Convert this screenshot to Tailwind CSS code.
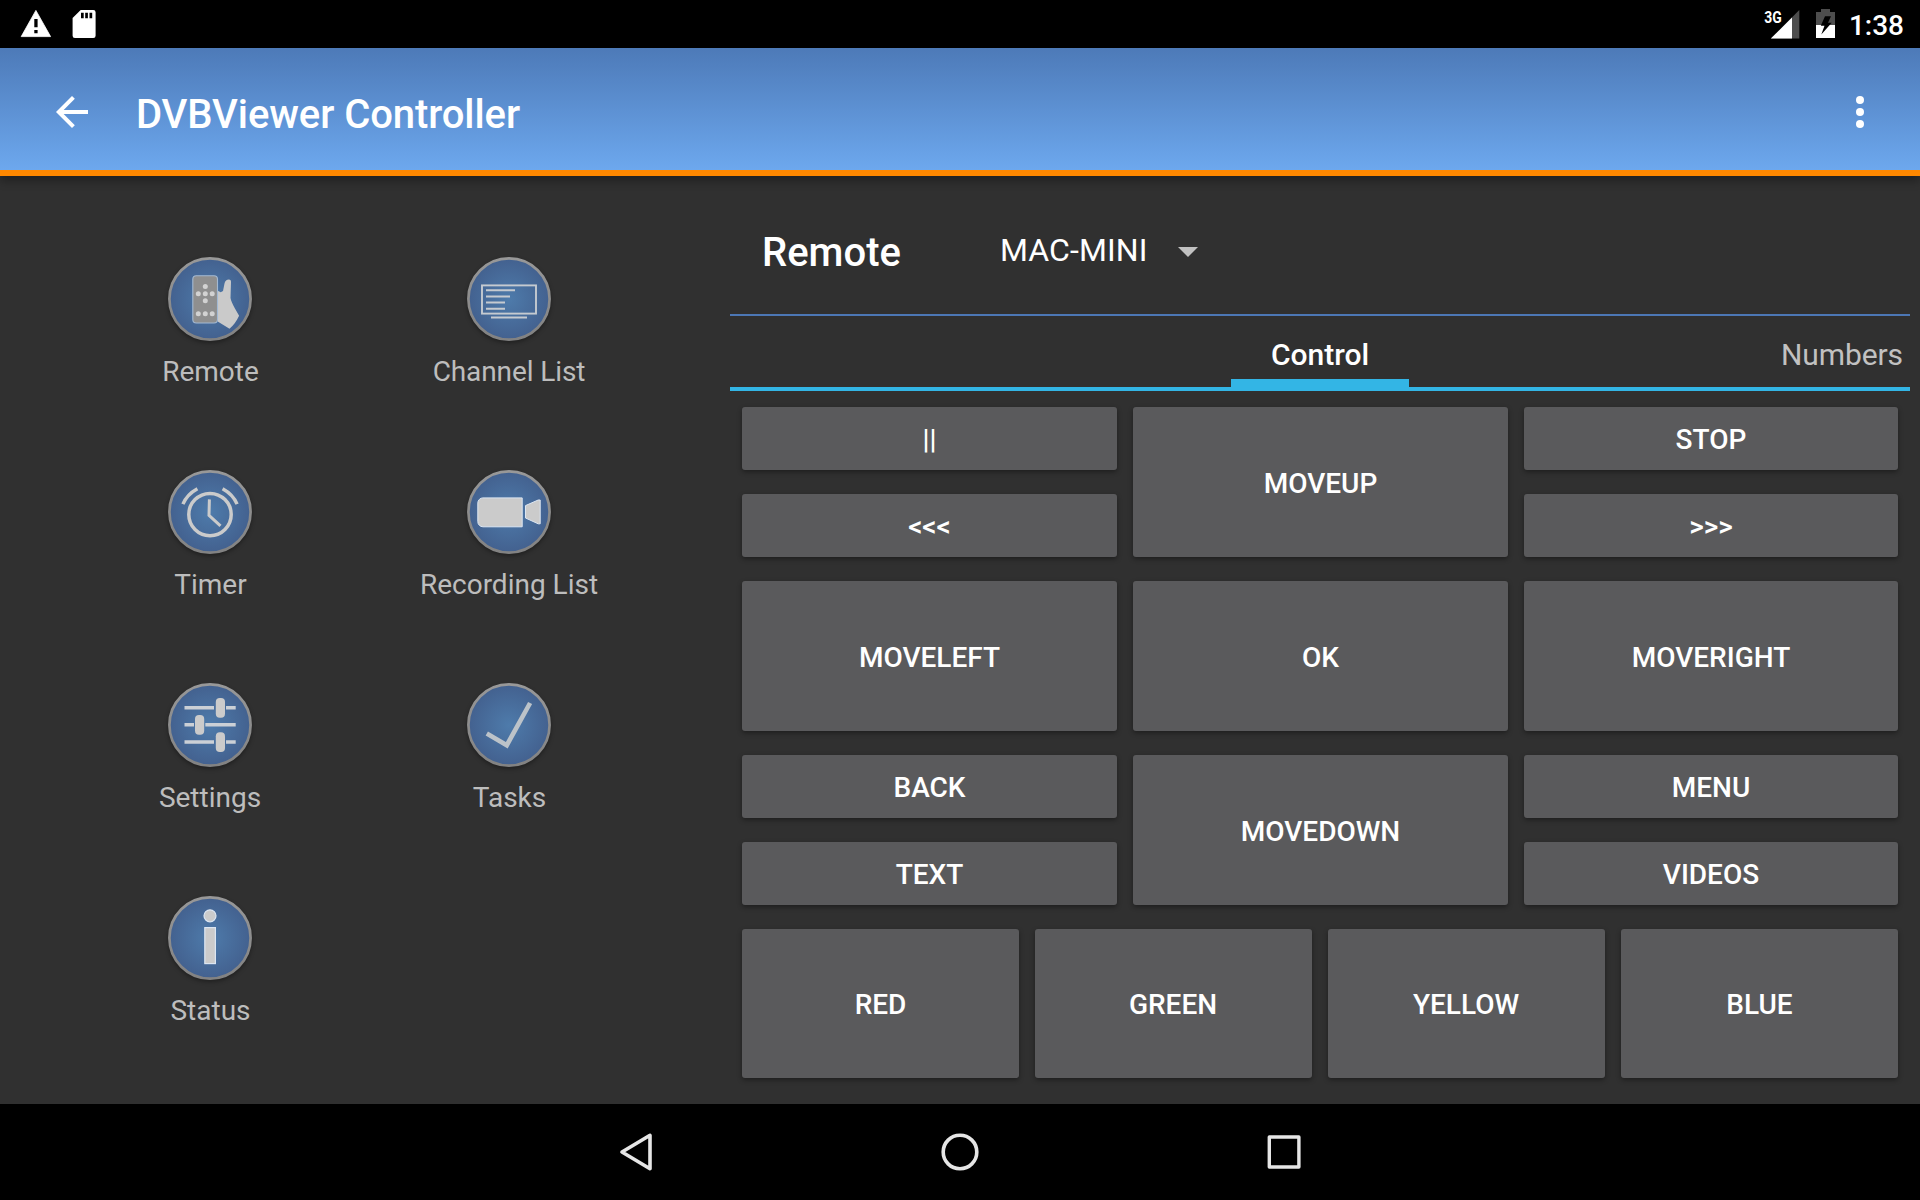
<!DOCTYPE html>
<html lang="en">
<head>
<meta charset="utf-8">
<title>DVBViewer Controller</title>
<script src="https://cdn.jsdelivr.net/npm/@tailwindcss/browser@4"></script>
</head>
<body class="flex h-[1200px] w-[1920px] flex-col overflow-hidden bg-[#303030] font-['Roboto',sans-serif] text-white">

<!-- Shared icon gradients -->
<svg class="absolute size-0">
  <defs>
    <radialGradient id="disc" cx="50%" cy="50%" r="50%">
      <stop offset="0" stop-color="#4e7bab"/><stop offset="1" stop-color="#43618f"/>
    </radialGradient>
    <linearGradient id="ring" x1="0" y1="0" x2="0" y2="1">
      <stop offset="0" stop-color="#989898"/><stop offset="1" stop-color="#828282"/>
    </linearGradient>
    <symbol id="base" viewBox="0 0 84 84"><circle cx="42" cy="42" r="40.6" fill="url(#disc)" stroke="url(#ring)" stroke-width="2.7"/></symbol>
  </defs>
</svg>

<!-- Status bar -->
<div class="flex h-12 shrink-0 items-start justify-between bg-black">
  <svg class="h-12 w-[110px]" viewBox="0 0 110 48">
    <path fill="#fff" d="M35.9 10.4 50.6 36.6H21.2z" stroke="#fff" stroke-width=".8" stroke-linejoin="round"/>
    <path fill="#000" d="M34.3 19h3.3v8.3h-3.3zM34.3 30h3.3v3.3h-3.3z"/>
    <path fill="#fff" d="M80.7 10H93.3a2.3 2.3 0 0 1 2.3 2.3V35.7a2.3 2.3 0 0 1-2.3 2.3H74.9a2.3 2.3 0 0 1-2.3-2.3V18z"/>
    <path fill="#000" d="M81 12.7h2.7v5.6H81zM85.2 12.7h2.7v5.6h-2.7zM89.5 12.7h2.7v5.6h-2.7z"/>
  </svg>
  <div class="flex pr-4">
    <svg class="h-12 w-[89px]" viewBox="1760 0 89 48">
      <path fill="#4d4d4d" d="M1799.3 10v28.6H1771z"/>
      <path fill="#fff" d="M1792 17.4v21.2h-21.2z"/>
      <text x="1764.3" y="22.7" textLength="17.5" lengthAdjust="spacingAndGlyphs" class="text-[17px] font-bold" fill="#fff">3G</text>
      <path fill="#4d4d4d" d="M1821 9h9v3h5v14h-19V12h5z"/>
      <path fill="#fff" d="M1816 25h19v13h-19z"/>
      <path fill="#000" d="M1825 16.3h6l-3 6.5h3.7l-10.4 11.8 3.2-8.8h-3.7z"/>
    </svg>
    <div class="pt-[10px] text-[28px] leading-[32px] font-medium">1:38</div>
  </div>
</div>

<!-- App bar -->
<header class="relative z-10 flex h-32 shrink-0 items-center border-b-6 border-[#ff8800] bg-linear-to-b from-[#4d7ab8] to-[#6da8ee] pt-[6px] pr-9 pl-12 shadow-[0_5px_9px_rgba(0,0,0,0.32)]">
  <svg class="size-12" viewBox="0 0 24 24" fill="#fff"><path d="M20 11H7.83l5.59-5.59L12 4l-8 8 8 8 1.41-1.41L7.83 13H20z"/></svg>
  <h1 class="ml-10 grow pt-[6px] text-[40px] leading-[48px] font-medium tracking-[-0.08px]">DVBViewer Controller</h1>
  <svg class="size-12" viewBox="0 0 24 24" fill="#fff"><circle cx="12" cy="6" r="2"/><circle cx="12" cy="12" r="2"/><circle cx="12" cy="18" r="2"/></svg>
</header>

<main class="flex min-h-0 grow">
  <!-- Navigation -->
  <nav class="grid w-[730px] shrink-0 auto-rows-[213px] grid-cols-[299px_299px] content-start pt-[81px] pl-[60.5px] text-[28px] leading-8 text-[#bdbdbd]">
    <a class="flex flex-col items-center gap-[15px]">
      <svg class="size-[84px] drop-shadow-[0_2px_2px_rgba(0,0,0,0.35)]" viewBox="0 0 84 84"><use href="#base"/>
        <path fill="#cacaca" d="M49.7 33.7l3 1.6 2.3-1.3 1.5-7.5c.5-2.7 2.2-4 4.4-4 1.6 0 2.2.9 2.1 2.6L62.5 41c.4 2.6 2.4 6.6 4.3 10.2l4.3 7.5c-2.5 5.3-5.5 9.6-9.6 13L49.7 64.5z"/>
        <rect x="24.8" y="18.7" width="24.7" height="47.3" rx="3.5" fill="#8f8f8f" stroke="#a3b9d3" stroke-width="1.1"/>
        <g fill="#d2d2d2"><circle cx="37.3" cy="29.5" r="2.5"/><circle cx="30.3" cy="36.7" r="2.5"/><circle cx="37.3" cy="36.7" r="2.5"/><circle cx="44.2" cy="36.7" r="2.5"/><circle cx="37.3" cy="43.7" r="2.5"/><circle cx="30.3" cy="56.7" r="2.5"/><circle cx="37.3" cy="56.7" r="2.5"/><circle cx="44.2" cy="56.7" r="2.5"/></g>
      </svg><span class="pl-px">Remote</span>
    </a>
    <a class="flex flex-col items-center gap-[15px]">
      <svg class="size-[84px] drop-shadow-[0_2px_2px_rgba(0,0,0,0.35)]" viewBox="0 0 84 84"><use href="#base"/>
        <rect x="15" y="28.4" width="54" height="28.2" fill="none" stroke="#c5cad0" stroke-width="1.9"/>
        <path stroke="#c5cad0" stroke-width="2" d="M19 33.2h29M19 39.4h24M19 45.6h19M19 51.8h19M24 60.4h36"/>
      </svg><span class="tracking-[-0.1px]">Channel List</span>
    </a>
    <a class="flex flex-col items-center gap-[15px]">
      <svg class="size-[84px] drop-shadow-[0_2px_2px_rgba(0,0,0,0.35)]" viewBox="0 0 84 84"><use href="#base"/>
        <g fill="none" stroke="#cbcbcb"><circle cx="42" cy="44.6" r="21.2" stroke-width="3.5"/>
        <path stroke-width="3" d="M41.4 29.4 41 45.3 52.5 55.8"/>
        <path stroke-width="3.4" d="M14.9 34.2Q19 24.5 29.4 18.8M69.1 34.2Q65 24.5 54.6 18.8"/></g>
      </svg><span class="pl-px">Timer</span>
    </a>
    <a class="flex flex-col items-center gap-[15px]">
      <svg class="size-[84px] drop-shadow-[0_2px_2px_rgba(0,0,0,0.35)]" viewBox="0 0 84 84"><use href="#base"/>
        <path fill="#cbcbcb" stroke="#dce6f2" stroke-width="1" d="M16 27.9H55.2V56.8H16a5.2 5.2 0 0 1-5.2-5.2V33.1a5.2 5.2 0 0 1 5.2-5.2zM58.5 35.6 71.2 30h2V53.8h-2L58.5 48z"/>
      </svg>Recording List
    </a>
    <a class="flex flex-col items-center gap-[15px]">
      <svg class="size-[84px] drop-shadow-[0_2px_2px_rgba(0,0,0,0.35)]" viewBox="0 0 84 84"><use href="#base"/>
        <path stroke="#cbd0d6" stroke-width="3.6" d="M16.5 24.7H46M58 24.7h9.7M16.5 41.8H26M37.3 41.8h30.4M16.5 59H46M58 59h9.7"/>
        <g fill="#cbcbcb"><rect x="47.8" y="15" width="9.2" height="19.7" rx="4"/><rect x="27" y="32" width="9.2" height="19.7" rx="4"/><rect x="47.8" y="49.3" width="9.2" height="19.7" rx="4"/></g>
      </svg>Settings
    </a>
    <a class="flex flex-col items-center gap-[15px]">
      <svg class="size-[84px] drop-shadow-[0_2px_2px_rgba(0,0,0,0.35)]" viewBox="0 0 84 84"><use href="#base"/>
        <path fill="none" stroke="#bcc3c9" stroke-width="4.6" d="M19.8 50.5 39.8 62.2 63.1 20"/>
      </svg><span class="pl-px">Tasks</span>
    </a>
    <a class="flex flex-col items-center gap-[15px]">
      <svg class="size-[84px] drop-shadow-[0_2px_2px_rgba(0,0,0,0.35)]" viewBox="0 0 84 84"><use href="#base"/>
        <g fill="#cbcbcb" stroke="#dce6f2" stroke-width="1.2"><circle cx="42" cy="19.8" r="6"/><rect x="36.8" y="31.6" width="10.6" height="36"/></g>
      </svg><span class="pl-px">Status</span>
    </a>
  </nav>

  <!-- Remote panel -->
  <section class="w-[1180px]">
    <div class="flex h-[140px] items-center border-b-2 border-[#4c77b5] pt-[14px] pl-8">
      <h2 class="w-[238px] pt-[2px] text-[40px] leading-[48px] font-medium">Remote</h2>
      <div class="flex items-center text-[32px] leading-10">
        <span class="w-[178px] pb-1 tracking-[0.1px]">MAC-MINI</span>
        <svg class="h-[10px] w-5" viewBox="0 0 20 10" fill="#c1c1c1"><path d="M0 0h20L10 10z"/></svg>
      </div>
    </div>
    <div class="flex h-[75px] justify-between border-b-4 border-[#33b5e5] text-[30px] leading-10">
      <span class="w-[122px]"></span>
      <span class="flex h-[71px] w-[178px] justify-center border-b-8 border-[#33b5e5] pt-[19px] font-medium">Control</span>
      <span class="flex w-[122px] justify-end pt-[19px] pr-[7px] tracking-[-0.1px] text-[#c1c1c1]">Numbers</span>
    </div>
    <div class="mx-3 mt-4 grid grid-cols-[375px_375px_374px] grid-rows-[63px_63px_150px_63px_63px] gap-x-4 gap-y-6 text-[28px] leading-8 font-medium *:flex *:items-center *:justify-center *:rounded-[3px] *:bg-[#5a5a5c] *:shadow-[0_2px_5px_rgba(0,0,0,0.38)]">
      <button class="pt-[2px]">||</button>
      <button class="row-span-2 pt-1">MOVEUP</button>
      <button class="pt-[2px]">STOP</button>
      <button class="pt-[2px]">&lt;&lt;&lt;</button>
      <button class="pt-[2px]">&gt;&gt;&gt;</button>
      <button class="pt-1">MOVELEFT</button>
      <button class="pt-1">OK</button>
      <button class="pt-1">MOVERIGHT</button>
      <button class="pt-[2px]">BACK</button>
      <button class="row-span-2 pt-1">MOVEDOWN</button>
      <button class="pt-[2px]">MENU</button>
      <button class="pt-[2px]">TEXT</button>
      <button class="pt-[2px]">VIDEOS</button>
    </div>
    <div class="mx-3 mt-6 grid h-[149px] grid-cols-4 gap-4 text-[28px] leading-8 font-medium *:flex *:items-center *:justify-center *:rounded-[3px] *:bg-[#5a5a5c] *:pt-[3px] *:shadow-[0_2px_5px_rgba(0,0,0,0.38)]">
      <button>RED</button>
      <button class="pr-px">GREEN</button>
      <button class="pr-px">YELLOW</button>
      <button>BLUE</button>
    </div>
  </section>
</main>

<!-- System navigation -->
<footer class="flex h-24 shrink-0 items-center justify-center gap-[276px] bg-black">
  <svg class="size-12" viewBox="0 0 48 48" fill="none" stroke="#e6e6e6" stroke-width="3.6" stroke-linejoin="round"><path d="M10 24 38 7.3V40.7z"/></svg>
  <svg class="size-12" viewBox="0 0 48 48" fill="none" stroke="#e6e6e6" stroke-width="3.6"><circle cx="24" cy="24" r="16.8"/></svg>
  <svg class="size-12" viewBox="0 0 48 48" fill="none" stroke="#e6e6e6" stroke-width="3.4" stroke-linejoin="round"><rect x="9.3" y="9" width="29.6" height="30"/></svg>
</footer>
</body>
</html>
